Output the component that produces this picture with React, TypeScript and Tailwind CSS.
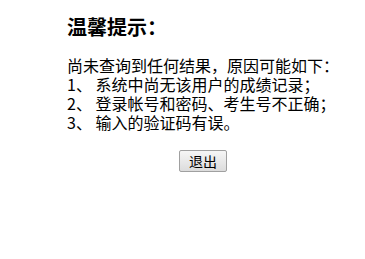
export default function App() {
  return (
    <div lang="zh-CN" className="w-[365px] h-[259px] bg-white text-black" style={{ fontFamily: '"Noto Sans CJK SC", "Liberation Sans", sans-serif' }}>
      <div className="pl-[67px] pt-[15px] w-[350px]">
        <h1 className="text-[20px] leading-[24px] font-bold">温馨提示：</h1>
        <div className="mt-[17px] text-[16px] leading-[19px] whitespace-nowrap">
          <p>尚未查询到任何结果，原因可能如下：</p>
          <p>1、 系统中尚无该用户的成绩记录；</p>
          <p>2、 登录帐号和密码、考生号不正确；</p>
          <p>3、 输入的验证码有误。</p>
        </div>
        <div className="mt-[16px] pl-[112px]">
          <button className="w-[48px] h-[22px] border border-[#a0a0a0] rounded-[2px] bg-gradient-to-b from-[#f6f6f6] to-[#dcdcdc] text-[14px] leading-[20px]">
            退出
          </button>
        </div>
      </div>
    </div>
  );
}
